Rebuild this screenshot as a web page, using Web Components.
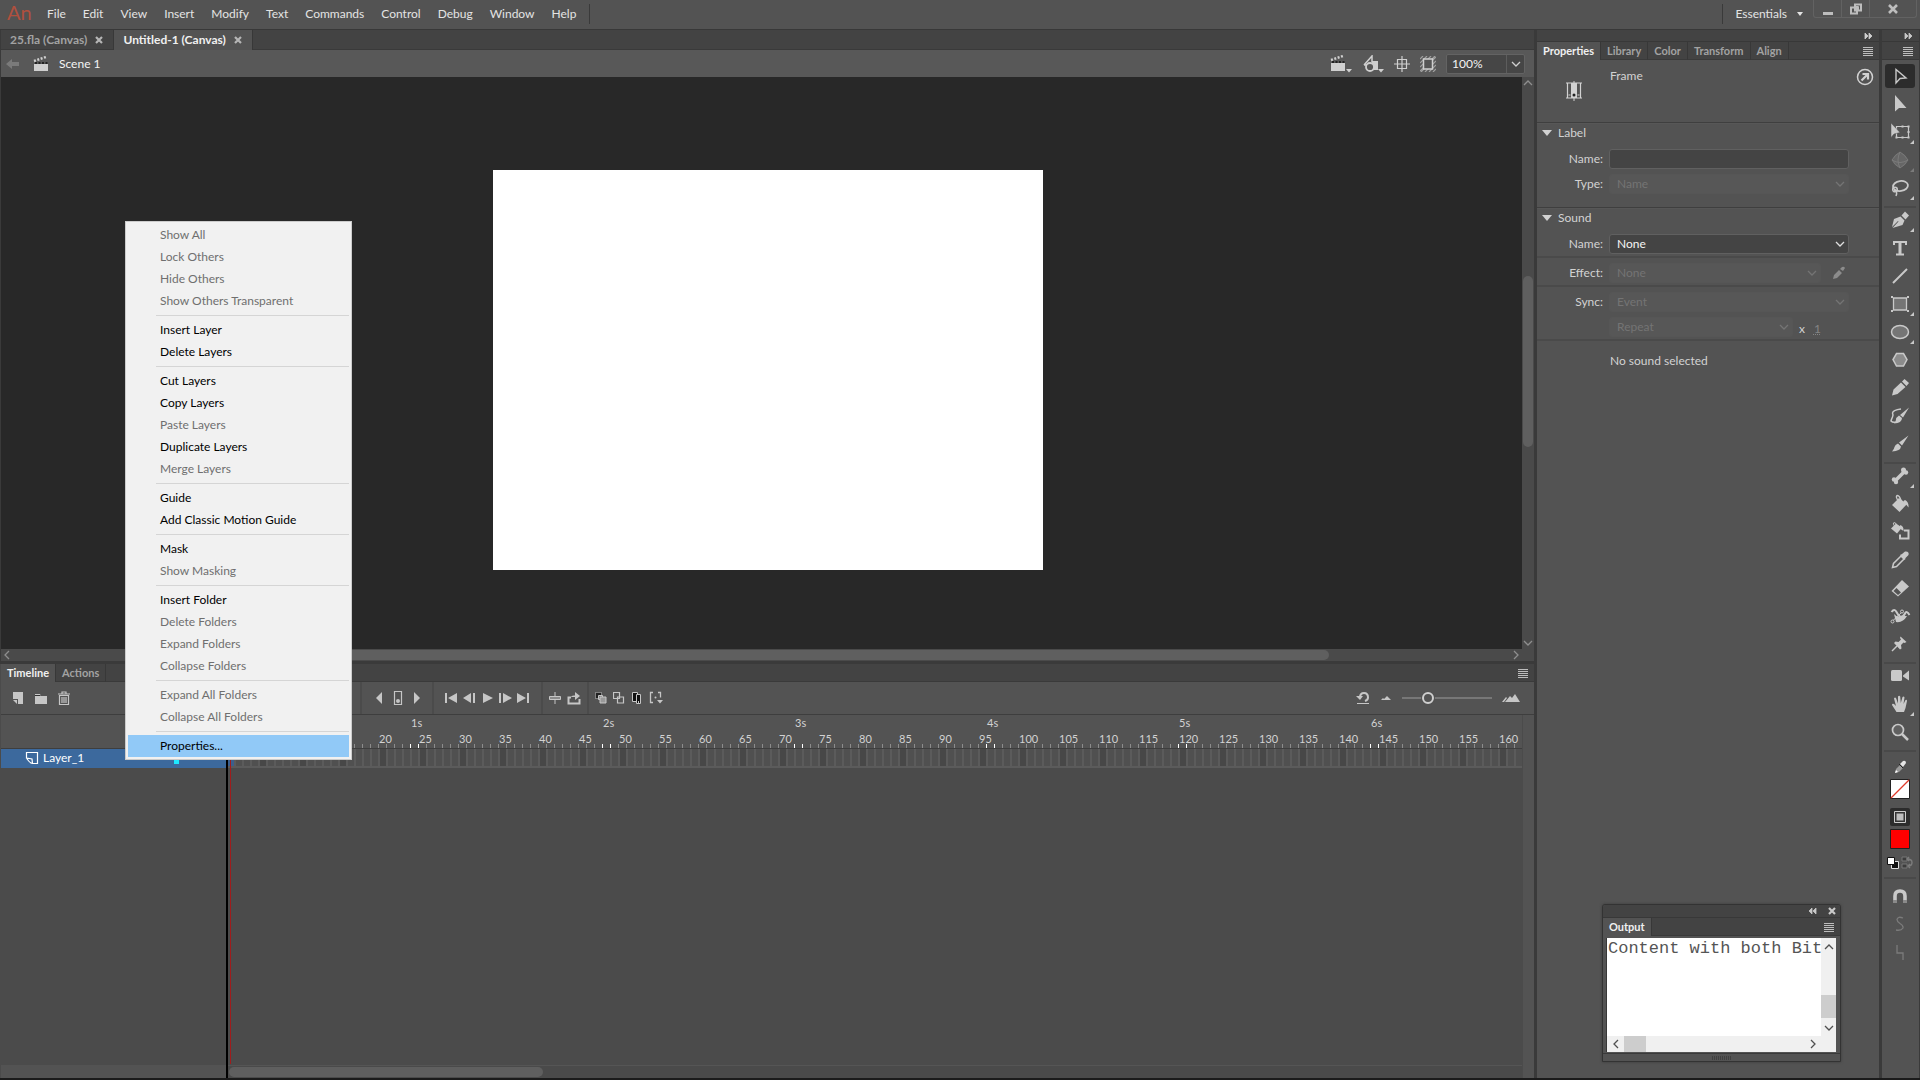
<!DOCTYPE html>
<html lang="en">
<head>
<meta charset="utf-8">
<title>Untitled-1 (Canvas)</title>
<style>
  html, body {
    height: 100%;
    margin: 0;
  }

  body {
    overflow: hidden;
    background: #1b1b1b;
    color: #d2d2d2;
    font: 12px/16px Lato, "Open Sans", sans-serif;
  }
</style>
</head>
<body>
<animate-app></animate-app>

<script>
// viewBox width, height and markup of every glyph; all drawn in currentColor
const ICONS = {
  back: [14, 12, '<path d="M0 6l6-5v3h7v4H6v3z" fill="currentColor"/>'],
  clapper: [16, 16, '<path d="M1 8h14v7H1z" fill="currentColor"/><path d="M1 5l12-4" stroke="currentColor" stroke-width="2.5" stroke-dasharray="2 1.5"/><path d="M2 7h13" stroke="#222" stroke-width="2" stroke-dasharray="2 1.5"/>'],
  clapperMenu: [22, 18, '<path d="M1 8h14v8H1z" fill="currentColor"/><path d="M1 5l12-4" stroke="currentColor" stroke-width="2.5" stroke-dasharray="2 1.5"/><path d="M2 7h13" stroke="#222" stroke-width="2" stroke-dasharray="2 1.5"/><path d="M16 14h6l-3 3.5z" fill="currentColor"/>'],
  symbolsMenu: [22, 18, '<path d="M2 10L10 1v6M2 10h5" fill="none" stroke="currentColor" stroke-width="1.5"/><path d="M10 6h6v9h-6z" fill="currentColor"/><circle cx="8" cy="12" r="4" fill="#575757" stroke="currentColor" stroke-width="1.8"/><path d="M16 14h6l-3 3.5z" fill="currentColor"/>'],
  center: [16, 16, '<path d="M8 0v16M0 8h16M3.5 3.5h9v9h-9z" fill="none" stroke="currentColor" stroke-width="1.2"/>'],
  clip: [16, 16, '<path d="M0 3l3-3M0 7l7-7M0 11L11 0M0 15L15 0M1 16L16 1M5 16L16 5M9 16l7-7M13 16l3-3" stroke="#a0a0a0" stroke-width="1.2"/><path d="M3.5 3h9v10h-9z" fill="#555" stroke="currentColor" stroke-width="1.5"/>'],
  chevronDown: [10, 6, '<path d="M1 1l4 4 4-4" fill="none" stroke="currentColor" stroke-width="1.3"/>'],
  chevronUp: [10, 6, '<path d="M1 5l4-4 4 4" fill="none" stroke="currentColor" stroke-width="1.3"/>'],
  chevronLeft: [6, 10, '<path d="M5 1L1 5l4 4" fill="none" stroke="currentColor" stroke-width="1.3"/>'],
  chevronRight: [6, 10, '<path d="M1 1l4 4-4 4" fill="none" stroke="currentColor" stroke-width="1.3"/>'],
  caret: [6, 4, '<path d="M0 0h6L3 4z" fill="currentColor"/>'],
  close: [8, 8, '<path d="M1 1l6 6M7 1L1 7" stroke="currentColor" stroke-width="2.2"/>'],
  minimize: [12, 12, '<path d="M1 9h10v3H1z" fill="currentColor"/>'],
  restore: [14, 12, '<path d="M6 1.5h6v6H6zM2 4.500h6v6H2z" fill="#535353" stroke="currentColor" stroke-width="2"/><path d="M6.5 3.5h3v4" fill="none" stroke="currentColor"/>'],
  closeWindow: [12, 12, '<path d="M2 2l8 8M10 2l-8 8" stroke="currentColor" stroke-width="2.6"/>'],
  collapse: [10, 8, '<path d="M1 1l3 3-3 3zM5 1l3 3-3 3z" fill="currentColor" stroke="currentColor" stroke-width=".8"/>'],
  expand: [10, 8, '<path d="M4 1L1 4l3 3zM8 1L5 4l3 3z" fill="currentColor" stroke="currentColor" stroke-width=".8"/>'],
  lines: [12, 10, '<path d="M1 1.5h10M1 3.5h10M1 5.5h10M1 7.5h10M1 9.500h10" stroke="currentColor"/>'],
  triangle: [10, 6, '<path d="M0 0h10L5 6z" fill="currentColor"/>'],
  frame: [18, 20, '<path d="M1 2h16M1 17h16M2.5 2v15M15.5 2v15" stroke="currentColor" stroke-width="1.2"/><path d="M6 2h6v15H6zM8.5 0h1v20h-1z" fill="currentColor"/><circle cx="9" cy="14" r="1.5" fill="#222"/><path d="M3.5 14h2M12.5 14h2" stroke="currentColor"/>'],
  help: [18, 18, '<circle cx="9" cy="9" r="7.5" fill="none" stroke="currentColor" stroke-width="1.5"/><path d="M5.5 12.500L11 7M6.500 6H12v5.5" fill="none" stroke="currentColor" stroke-width="2.2"/>'],
  pencilSmall: [14, 14, '<path d="M1 13l1-4 5-5 3 3-5 5zM8 3l2-2q2-1 3 1l-2 3z" fill="currentColor"/>'],

  newLayer: [14, 14, '<path d="M2 1h10v12H7V8H2z" fill="currentColor"/><path d="M2 9h4v4z" fill="currentColor"/>'],
  folder: [14, 14, '<path d="M1 3h5l1 2h6v8H1z" fill="currentColor"/><path d="M1 4.500h5.5" stroke="#333"/>'],
  trash: [14, 14, '<path d="M2.5 4.500h9v9h-9zM1 3h12M5 3V1h4v2M5 6v6M7 6v6M9 6v6" fill="none" stroke="currentColor" stroke-width="1.2"/>'],
  prevKey: [8, 14, '<path d="M7 1v12L1 7z" fill="currentColor"/>'],
  nextKey: [8, 14, '<path d="M1 1v12l6-6z" fill="currentColor"/>'],
  keyFrame: [10, 14, '<path d="M1.5.5h7v13h-7z" fill="none" stroke="currentColor" stroke-width="1.2"/><circle cx="5" cy="10" r="2" fill="currentColor"/>'],
  first: [14, 12, '<path d="M1 1h2v10H1zM13 1v10L4 6z" fill="currentColor"/>'],
  stepBack: [14, 12, '<path d="M9 1v10L1 6zM11 1h2v10h-2z" fill="currentColor"/>'],
  play: [14, 12, '<path d="M3 1v10l10-5z" fill="currentColor"/>'],
  stepForward: [14, 12, '<path d="M1 1h2v10H1zM5 1v10l9-5z" fill="currentColor"/>'],
  last: [14, 12, '<path d="M1 1v10l9-5zM11 1h2v10h-2z" fill="currentColor"/>'],
  centerFrame: [12, 14, '<path d="M5.5 1h1v12h-1z" fill="currentColor"/><path d="M.5 5.5h11v3H.5z" fill="#8a8a8a" stroke="currentColor"/>'],
  loop: [14, 14, '<path d="M4 6.5H1.5v6h11V8" fill="none" stroke="currentColor" stroke-width="2"/><path d="M4 6.500q0-2 3-2h1V1l5 4-5 4V6H4z" fill="currentColor"/>'],
  onion: [12, 12, '<path d="M.5.5h6v6h-6z" fill="#222" stroke="currentColor" stroke-dasharray="1 1"/><path d="M3.5 3.5h4v4h-4z" fill="#777" stroke="currentColor"/><path d="M5 5h6v6H5z" fill="#999" stroke="currentColor"/>'],
  onionOutline: [12, 12, '<path d="M.5.5h6v6h-6zM4.500 5h6v6h-6z" fill="#535353" stroke="currentColor" stroke-width="1.2"/>'],
  editFrames: [12, 14, '<path d="M1.5 1.5h5v9h-5z" fill="#111" stroke="currentColor"/><path d="M5.5 3.500h4v9h-4z" fill="#111" stroke="currentColor"/><path d="M7 10h1v2H7z" fill="currentColor"/>'],
  onionMarkers: [14, 14, '<path d="M4 1.500H1.500v10H4M9 1.500h2.500v5" fill="none" stroke="currentColor" stroke-width="1.3"/><circle cx="6.500" cy="6.500" r="1" fill="currentColor"/><path d="M8 9h6l-3 3.500z" fill="currentColor"/>'],
  resetZoom: [14, 14, '<path d="M4 6.500Q4 2 8 2t4 4.500Q12 9 9 10" fill="none" stroke="currentColor" stroke-width="2"/><path d="M0 5h7L4 9zM1 12h12v1H1z" fill="currentColor"/>'],
  hillSmall: [12, 6, '<path d="M1 5l2-2 1 1 3-3 4 4z" fill="currentColor"/>'],
  hillBig: [18, 10, '<path d="M0 9l4-5 1 1-3 4zM3 9l5-6 2 2 3-4 5 8z" fill="currentColor"/>'],
  layer: [14, 14, '<path d="M1.5 1.500h11v11H7.500L7 8 1.500 7zM1.500 7q3 5 6 5.500" fill="none" stroke="currentColor" stroke-width="1.2"/>'],

  select: [24, 24, '<path d="M8 5.500V19l4-4.500 6-.5z" fill="none" stroke="currentColor" stroke-width="1.4"/>'],
  subselect: [24, 24, '<path d="M7 3v16.500l4-3.500h7.500z" fill="currentColor"/>'],
  transform: [24, 24, '<path d="M8.500 6.500h12v11h-12z" fill="none" stroke="currentColor" stroke-width="1.2"/><path d="M7.500 16.500h2v2h-2zM19.500 16.500h2v2h-2zM19.500 5.500h2v2h-2zM13.500 5.500h2v2h-2zM13.500 16.500h2v2h-2zM19.500 11h2v2h-2z" fill="currentColor"/><path d="M3 3v14.500l3-3.500 6-1.500z" fill="currentColor" stroke="#535353" stroke-width=".5"/>'],
  rotate3d: [24, 24, '<circle cx="12" cy="12" r="7" fill="#666"/><path d="M12 4q5 3 8 8-3 5-8 8-5-3-8-8 3-5 8-8zM4 12q8 5 16 0M12 4q-4 8 0 16" fill="none" stroke="currentColor"/>'],
  lasso: [24, 24, '<ellipse cx="12.500" cy="10" rx="7.500" ry="5" fill="none" stroke="currentColor" stroke-width="1.8" transform="rotate(-8 12.500 10)"/><circle cx="7" cy="13.500" r="2.300" fill="none" stroke="currentColor" stroke-width="1.500"/><path d="M6 14q4 1 2 6" fill="none" stroke="currentColor" stroke-width="1.500"/>'],
  pen: [24, 24, '<path d="M13.500 7.500l3.500-4 4 4-3.500 4zM12.500 8.500l4 4-2 4.500-10 3 6-6.500-.5-.5-6 6 2-8z" fill="currentColor"/>'],
  text: [24, 24, '<path d="M5 5h14v4h-2V7h-3.500v10.500H16V19.500H8V17.500h2.500V7H7v2H5z" fill="currentColor"/>'],
  line: [24, 24, '<path d="M5 19L19 5" stroke="currentColor" stroke-width="2"/>'],
  rect: [24, 24, '<path d="M5.500 6h13v12h-13z" fill="#757575" stroke="currentColor" stroke-width="1.3"/><path d="M3 4h2v2H3zM19 4h2v2h-2zM3 18h2v2H3zM19 18h2v2h-2z" fill="currentColor"/>'],
  oval: [24, 24, '<ellipse cx="12" cy="12" rx="8.500" ry="6.500" fill="#757575" stroke="currentColor" stroke-width="1.500"/>'],
  poly: [24, 24, '<path d="M8.500 5.500h7l3.500 6-3.500 6.500h-7L5 11.500z" fill="#8c8c8c" stroke="currentColor" stroke-width="1.500"/>'],
  pencil: [24, 24, '<path d="M4 19.500l1.500-6 7.500-7 4.500 4.500-8 7zM14 5.500l2.500-2.500 4.500 4-2.500 3z" fill="currentColor"/>'],
  artBrush: [24, 24, '<path d="M21 3.500l-6 10-3-2.500zM11 11.500l3 2.500q0 5-8 5.500 2-2 2-4t3-4z" fill="currentColor"/><path d="M13 5Q5 6 4.500 9q1 2 0 4t-1.500 4q2 2 5 1" fill="none" stroke="currentColor" stroke-width="1.500"/>'],
  brush: [24, 24, '<path d="M20.500 3.500L14 13.500l-3-3zM10 11.500l3 3q-.5 4.500-9 5 2-2 2.500-4.500t3.500-3.500z" fill="currentColor"/>'],
  bone: [24, 24, '<path d="M7.500 16.500l9-9" stroke="currentColor" stroke-width="3.500"/><circle cx="15.500" cy="6" r="2.500" fill="currentColor"/><circle cx="18" cy="8.500" r="2.200" fill="currentColor"/><circle cx="6" cy="15.500" r="2.200" fill="currentColor"/><circle cx="8" cy="18" r="2.200" fill="currentColor"/>'],
  bucket: [24, 24, '<path d="M4 13l7-7 8 6-7.500 8zM17 8q4 2 3.500 7.500l-2-2.500-3-4z" fill="currentColor"/><path d="M11.500 11q-5-7-2-7.500 2 0 4 6" fill="none" stroke="currentColor" stroke-width="1.300"/>'],
  ink: [24, 24, '<path d="M3 8.500l5-5 6 4-5 6zM12 5q4 1 3.500 6l-3-2z" fill="currentColor"/><path d="M8 8Q4 3 6 2.500t4 5" fill="none" stroke="currentColor"/><path d="M16 10.500h4.500v8H12v-4" fill="none" stroke="currentColor" stroke-width="2"/>'],
  dropper: [24, 24, '<path d="M4.500 19.500l1-4L13 8l3 3-7.500 7.500z" fill="none" stroke="currentColor" stroke-width="1.500"/><path d="M12 7l2-1 3-2.500q4.500-.5 3.500 3.500L17.500 10l-.5 2z" fill="currentColor"/>'],
  eraser: [24, 24, '<path d="M3.500 15L14 4l7 6.500L10 20.500z" fill="currentColor"/><path d="M5.500 15l3-3 4.500 4.500-3 2.500z" fill="#535353"/>'],
  warp: [24, 24, '<path d="M4 17.500L14 8" stroke="currentColor"/><path d="M3.500 8q3-4 5 0t4 5q3 0 4.500-3.500t4.500 1.500" fill="none" stroke="currentColor" stroke-width="2"/><path d="M6 10q3 4 9 2l4 0q-4 7-11 6z" fill="currentColor"/><circle cx="4.500" cy="17.500" r="1.500" fill="#535353" stroke="currentColor"/><circle cx="14" cy="7.500" r="1.500" fill="#535353" stroke="currentColor"/>'],
  pin: [24, 24, '<path d="M12.500 4.500l6 5.500-2 1-1-.5-2.500 2.500.5 3.500-1.500 1-6-6.500 1.500-1.500 3 .5L13 7.500l-1-1.500z" fill="currentColor"/><path d="M9 14l-5 5" stroke="currentColor" stroke-width="1.500"/>'],
  camera: [24, 24, '<rect x="3" y="6" width="11" height="11" rx="1.500" fill="currentColor"/><path d="M15 11.500l6-5v10l-6-4z" fill="currentColor"/>'],
  hand: [24, 24, '<path d="M8.500 20L4 13q0-2 2-1l2 2-2-7.500q1-2 2.200 0l1.800 5V4.500q1.300-1.500 2.200 0l.6 6.500 1.700-6q1.500-1 2 .5l-1 6.500 2-4q1.500-.7 1.500 1L17.500 16l-1.500 4z" fill="currentColor"/>'],
  zoom: [24, 24, '<circle cx="10" cy="10" r="5.500" fill="#606060" stroke="currentColor" stroke-width="1.700"/><path d="M14 14l6 6" stroke="currentColor" stroke-width="2.500"/>'],
  strokeColor: [24, 24, '<path d="M7 18l1-4 4-4 3 3-4 4z" fill="#999"/><path d="M7 18l1-3 2 2z" fill="#fff"/><path d="M12 9l3-3q3-1 3 2l-3 4z" fill="#e6e6e6"/><path d="M11 9l4 4" stroke="#222"/>'],
  noStroke: [20, 20, '<path d="M.5.500h19v19H.5z" fill="#fff" stroke="#222"/><path d="M1 19L19 1" stroke="#e03a2a" stroke-width="1.200"/>'],
  fillKind: [20, 18, '<rect width="20" height="18" rx="2" fill="#2c2c2c"/><path d="M4.500 3.500h11v11h-11z" fill="#333" stroke="#ccc"/><path d="M6.500 5.500h7v7h-7z" fill="#bdbdbd"/>'],
  fillColor: [20, 20, '<path d="M.5.500h19v19H.5z" fill="red" stroke="#222"/>'],
  swapColors: [28, 14, '<path d="M5.500 5.500h7v7h-7z" fill="#111" stroke="#ddd"/><path d="M1.500 1.500h7v7h-7z" fill="#fff" stroke="#111"/><path d="M16 1h5v4h-5zM16 8h5v4h-5z" fill="#3c3c3c" stroke="#777"/><path d="M21 3q5 0 5 3.500T22 10M23 1l-2 2 2 2M24 8l-2 2 2 2" fill="none" stroke="#7c7c7c" stroke-width="1.400"/>'],
  magnet: [24, 24, '<path d="M7 16v-4q0-5 5-5t5 5v4" fill="none" stroke="currentColor" stroke-width="3.600"/><path d="M5 16h4v3H5zM15 16h4v3h-4z" fill="#8a8a8a"/>'],
  smooth: [24, 24, '<path d="M15 6q-5-2-6 1.500 0 2 3 4 3.500 2 3 4.500-2 3-7 2" fill="none" stroke="currentColor" stroke-width="1.300"/>'],
  straighten: [24, 24, '<path d="M9 5v8h6v7" fill="none" stroke="currentColor" stroke-width="1.300"/>'],
};

class UiElement extends HTMLElement {
  constructor() {
    super();
    this._shadowDOM = this.attachShadow({ mode: 'open' });
  }

  connectedCallback() {
    this.render();
  }
}

class UiIcon extends UiElement {
  render() {
    const [width, height, body] = ICONS[this.getAttribute('name')];
    this._shadowDOM.innerHTML = `
    <style>
      :host {
        display: inline-flex;
        flex: none;
      }

      svg {
        display: block;
      }
    </style>
    <svg width="${width}" height="${height}" viewBox="0 0 ${width} ${height}" aria-hidden="true">${body}</svg>`;
  }
}

class IconButton extends UiElement {
  render() {
    this._shadowDOM.innerHTML = `
    <style>
      :host {
        display: inline-flex;
        flex: none;
      }

      button {
        display: flex;
        align-items: center;
        justify-content: center;
        padding: 0;
        border: 0;
        background: none;
        color: inherit;
      }
    </style>
    <button type="button" aria-label="${this.getAttribute('label')}"><ui-icon name="${this.getAttribute('icon')}"></ui-icon></button>`;
  }
}

class MenuBar extends UiElement {
  render() {
    const menus = ['File', 'Edit', 'View', 'Insert', 'Modify', 'Text', 'Commands', 'Control', 'Debug', 'Window', 'Help'];
    this._shadowDOM.innerHTML = `
    <style>
      :host {
        display: flex;
        align-items: center;
        box-sizing: border-box;
        height: 30px;
        padding: 0 0 2px 7px;
        background: #535353;
        border-bottom: 1px solid #383838;
        color: #e4e4e4;
      }

      .logo {
        align-self: flex-start;
        width: 32px;
        color: #b0503e;
        font-size: 20px;
        line-height: 24px;
      }

      nav {
        display: flex;
        gap: 1px;
        height: 20px;
        padding-right: 5px;
        border-right: 1px solid #3a3a3a;
      }

      nav button, .space {
        padding: 0 8px;
        border: 0;
        background: none;
        color: inherit;
        font: inherit;
      }

      .space {
        display: flex;
        align-items: center;
        gap: 10px;
        height: 20px;
        margin-left: auto;
        padding: 0 10px 0 12px;
        border-left: 1px solid #3a3a3a;
      }

      .window {
        display: flex;
        align-self: flex-start;
        height: 17px;
        margin-right: 3px;
        border: 1px solid #626262;
        border-top: 0;
        border-radius: 0 0 3px 3px;
        color: #bdbdbd;
      }

      .window icon-button {
        justify-content: center;
        width: 27px;
      }

      .window icon-button + icon-button {
        border-left: 1px solid #626262;
      }

      .window icon-button:last-child {
        width: 46px;
      }
    </style>
    <span class="logo">An</span>
    <nav>${menus.map((name) => `<button type="button">${name}</button>`).join('')}</nav>
    <button type="button" class="space">Essentials <ui-icon name="caret"></ui-icon></button>
    <div class="window">
      <icon-button icon="minimize" label="Minimize"></icon-button>
      <icon-button icon="restore" label="Restore"></icon-button>
      <icon-button icon="closeWindow" label="Close"></icon-button>
    </div>`;
  }
}

// Row of tabs; tabs="A|B|C", the one numbered by active is raised
class TabStrip extends UiElement {
  render() {
    const active = Number(this.getAttribute('active') || 0);
    const closable = this.hasAttribute('closable');
    const tabs = this.getAttribute('tabs').split('|').map((name, i) => `
      <div class="tab${i === active ? ' active' : ''}">
        <button type="button">${name}</button>
        ${closable ? '<icon-button icon="close" label="Close tab"></icon-button>' : ''}
      </div>`).join('');
    this._shadowDOM.innerHTML = `
    <style>
      :host {
        display: flex;
        height: 18px;
        padding-right: 5px;
        background: #434343;
        box-shadow: inset 0 -1px #3a3a3a;
        color: #a2a2a2;
        font-size: 11px;
        font-weight: bold;
      }

      :host([closable]) {
        height: 20px;
        font-size: 12px;
      }

      .tab {
        display: flex;
        align-items: center;
        gap: 8px;
        padding: 0 6px;
        border-right: 1px solid #383838;
      }

      :host([closable]) .tab {
        padding: 0 10px 0 9px;
      }

      .active {
        background: #535353;
        color: #f0f0f0;
      }

      .tab button {
        padding: 0;
        border: 0;
        background: none;
        color: inherit;
        font: inherit;
      }

      .tab icon-button {
        color: #b5b5b5;
      }

      .more {
        align-self: center;
        margin-left: auto;
        color: #bdbdbd;
      }
    </style>
    ${tabs}
    ${closable ? '' : '<icon-button class="more" icon="lines" label="Panel menu"></icon-button>'}`;
  }
}

class EditBar extends UiElement {
  render() {
    this._shadowDOM.innerHTML = `
    <style>
      :host {
        display: flex;
        align-items: center;
        gap: 10px;
        height: 27px;
        padding: 0 9px 0 5px;
        background: #585858;
        color: #cfcfcf;
      }

      .back {
        margin-right: 3px;
        color: #7a7a7a;
      }

      .scene {
        flex: 1;
        color: #f4f4f4;
      }

      .zoom {
        display: grid;
        grid-template-columns: 60px 17px;
        align-items: center;
        height: 18px;
        border: 1px solid #636363;
        border-radius: 2px;
        background: #464646;
      }

      input {
        min-width: 0;
        height: 18px;
        padding: 0 5px;
        box-sizing: border-box;
        border: 0;
        border-right: 1px solid #5d5d5d;
        background: none;
        color: #f4f4f4;
        font: inherit;
      }

      .zoom icon-button {
        justify-content: center;
      }
    </style>
    <icon-button class="back" icon="back" label="Back"></icon-button>
    <ui-icon name="clapper"></ui-icon>
    <span class="scene">Scene 1</span>
    <icon-button icon="clapperMenu" label="Edit scene"></icon-button>
    <icon-button icon="symbolsMenu" label="Edit symbols"></icon-button>
    <icon-button icon="center" label="Center stage"></icon-button>
    <icon-button icon="clip" label="Clip content"></icon-button>
    <div class="zoom">
      <input type="text" value="100%" aria-label="Zoom">
      <icon-button icon="chevronDown" label="Zoom levels"></icon-button>
    </div>`;
  }
}

// parts="before thumb after" gives the shares of the track
class ScrollTrack extends UiElement {
  render() {
    const [before, thumb, after] = this.getAttribute('parts').split(' ');
    const vertical = this.hasAttribute('vertical');
    const bare = this.hasAttribute('bare');
    const arrow = (name) => (bare ? '' : `<span class="arrow"><ui-icon name="${name}"></ui-icon></span>`);
    this._shadowDOM.innerHTML = `
    <style>
      :host {
        display: flex;
        min-width: 0;
        min-height: 0;
        height: 12px;
        background: var(--track, #4a4a4a);
        color: var(--arrow, #8e8e8e);
      }

      :host([vertical]) {
        flex-direction: column;
        width: 12px;
        height: auto;
      }

      .arrow {
        display: flex;
        align-items: center;
        justify-content: center;
        flex: 0 0 var(--end, 12px);
      }

      .thumb {
        border-radius: var(--round, 6px);
        background: var(--thumb, #5f5f5f);
        margin: var(--inset, 1px);
      }
    </style>
    ${arrow(vertical ? 'chevronUp' : 'chevronLeft')}
    <span style="flex: ${before}"></span>
    <span class="thumb" style="flex: ${thumb}"></span>
    <span style="flex: ${after}"></span>
    ${arrow(vertical ? 'chevronDown' : 'chevronRight')}`;
  }
}

class StageView extends UiElement {
  render() {
    this._shadowDOM.innerHTML = `
    <style>
      :host {
        display: grid;
        grid-template-columns: 1fr 12px;
        grid-template-rows: 1fr 12px;
        min-height: 0;
        background: #4a4a4a;
      }

      .board {
        display: grid;
        place-items: center;
        padding: 14px 0 0 12px;
        min-height: 0;
        background: #282828;
      }

      .stage {
        width: 550px;
        height: 400px;
        background: #fff;
      }
    </style>
    <div class="board"><div class="stage"></div></div>
    <scroll-track vertical parts="187 171 190"></scroll-track>
    <scroll-track parts="180 1138 180"></scroll-track>`;
  }
}

class TimelineToolbar extends UiElement {
  render() {
    const group = (kind, items) => `<div class="group ${kind}">${items.map(([icon, label]) => `<icon-button icon="${icon}" label="${label}"></icon-button>`).join('')}</div>`;
    this._shadowDOM.innerHTML = `
    <style>
      :host {
        display: flex;
        align-items: center;
        height: 32px;
        background: #535353;
        border-bottom: 1px solid #3e3e3e;
        color: #c6c6c6;
      }

      .group {
        display: flex;
        align-items: center;
        gap: 6px;
        box-sizing: border-box;
        height: 32px;
        padding: 0 6px;
        border-right: 2px solid #4b4b4b;
      }

      .layers {
        gap: 9px;
        width: 361px;
        padding: 0 10px;
      }

      .keys {
        gap: 10px;
        padding: 0 11px 0 13px;
      }

      .playback {
        gap: 4px;
        padding: 0 11px 0 10px;
      }

      .onion {
        border: 0;
      }

      .scale {
        display: flex;
        align-items: center;
        gap: 10px;
        margin-left: auto;
        padding-right: 14px;
      }

      input {
        appearance: none;
        width: 90px;
        height: 12px;
        margin: 0;
        background: linear-gradient(#777, #777) center / 100% 2px no-repeat;
      }

      input::-webkit-slider-thumb {
        appearance: none;
        box-sizing: border-box;
        width: 12px;
        height: 12px;
        border: 2px solid #cfcfcf;
        border-radius: 50%;
        background: #535353;
        box-shadow: 0 0 0 1px #535353;
      }
    </style>
    ${group('layers', [['newLayer', 'New layer'], ['folder', 'New folder'], ['trash', 'Delete']])}
    ${group('keys', [['prevKey', 'Previous keyframe'], ['keyFrame', 'Insert keyframe'], ['nextKey', 'Next keyframe']])}
    ${group('playback', [['first', 'First frame'], ['stepBack', 'Step back'], ['play', 'Play'], ['stepForward', 'Step forward'], ['last', 'Last frame']])}
    ${group('', [['centerFrame', 'Center frame'], ['loop', 'Loop']])}
    ${group('onion', [['onion', 'Onion skin'], ['onionOutline', 'Onion skin outlines'], ['editFrames', 'Edit multiple frames'], ['onionMarkers', 'Modify markers']])}
    <div class="scale">
      <icon-button icon="resetZoom" label="Reset timeline zoom"></icon-button>
      <icon-button icon="hillSmall" label="Smaller frames"></icon-button>
      <input type="range" min="0" max="100" value="26" aria-label="Frame size">
      <icon-button icon="hillBig" label="Larger frames"></icon-button>
    </div>`;
  }
}

class TimelinePanel extends UiElement {
  render() {
    const frames = Array.from({ length: 32 }, (_, i) => `<span>${(i + 1) * 5}</span>`).join('');
    const seconds = [1, 2, 3, 4, 5, 6].map((n) => `<span>${n}s</span>`).join('');
    this._shadowDOM.innerHTML = `
    <style>
      :host {
        display: flex;
        flex-direction: column;
        min-height: 0;
        border-top: 3px solid #3a3a3a;
        background: #4b4b4b;
      }

      .body {
        display: grid;
        grid-template-columns: 225px minmax(0, 1fr) 12px;
        grid-template-rows: 34px 20px minmax(0, 1fr) 13px;
        flex: 1;
        min-height: 0;
      }

      .head {
        background: #535353;
        border-bottom: 1px solid #3e3e3e;
      }

      .layer {
        display: flex;
        align-items: center;
        gap: 4px;
        padding-left: 24px;
        background: #3c699d;
        color: #fff;
        margin-bottom: 1px;
      }

      .layer i {
        width: 5px;
        height: 5px;
        margin: 6px 47px 0 auto;
        background: #1ee8ff;
      }

      .frames {
        grid-area: 1 / 2 / 5 / 3;
        position: relative;
        display: grid;
        grid-template-rows: 34px 20px minmax(0, 1fr) 13px;
        border-left: 2px solid #000;
        overflow: hidden;
      }

      /* one tick closes each 8px frame, a bright pair stands at every second */
      .ruler {
        background:
          linear-gradient(90deg, transparent 182px, #fff 182px 183px, transparent 183px 190px, #fff 190px 191px, transparent 191px) 0 100% / 192px 4px repeat-x,
          linear-gradient(90deg, transparent 6px, #8c8c8c 6px 7px, transparent 7px) 0 100% / 8px 4px repeat-x,
          #535353;
        border-bottom: 1px solid #3e3e3e;
        overflow: hidden;
        font-size: 11px;
      }

      .row {
        display: flex;
      }

      .row span {
        flex: 0 0 40px;
      }

      .numbers {
        padding-left: 31px;
      }

      .seconds {
        padding-left: 183px;
      }

      .seconds span {
        flex-basis: 192px;
      }

      .cells {
        margin-bottom: 1px;
        border-bottom: 2px solid #5b5b5b;
        background:
          linear-gradient(90deg, transparent 32px, #474747 32px 38px, transparent 38px) 0 0 / 40px 100%,
          linear-gradient(90deg, #505050 6px, #5b5b5b 6px) 0 0 / 8px 100%;
      }

      .cells i {
        display: block;
        width: 6px;
        height: 100%;
        background: #3a5f8d;
      }

      .playhead {
        position: absolute;
        top: 35px;
        bottom: 14px;
        left: 2px;
        width: 1px;
        background: #a01c1c;
      }

      .foot {
        grid-area: 4 / 1;
        background: #535353;
      }

      .edge {
        grid-area: 1 / 3 / 5 / 4;
        background: #535353;
        border-left: 1px solid #4b4b4b;
      }

      .frames scroll-track {
        grid-row: 4;
        border-top: 1px solid #555;
      }
    </style>
    <tab-strip tabs="Timeline|Actions"></tab-strip>
    <timeline-toolbar></timeline-toolbar>
    <div class="body">
      <div class="head"></div>
      <div class="layer"><ui-icon name="layer"></ui-icon>Layer_1<i></i></div>
      <div class="foot"></div>
      <div class="frames">
        <div class="ruler">
          <div class="row seconds">${seconds}</div>
          <div class="row numbers">${frames}</div>
        </div>
        <div class="cells"><i></i></div>
        <scroll-track bare parts="0 314 980"></scroll-track>
        <div class="playhead"></div>
      </div>
      <div class="edge"></div>
    </div>`;
  }
}

// Labelled input or drop-down; the slot takes what follows the control
class FieldRow extends UiElement {
  render() {
    const label = this.getAttribute('label');
    const value = this.getAttribute('value') || '';
    const disabled = this.hasAttribute('disabled') ? 'disabled' : '';
    const named = label ? `<label for="control">${label}</label>` : '<span></span>';
    const aria = label ? '' : `aria-label="${this.getAttribute('hint')}"`;
    const control = this.hasAttribute('text')
      ? '<input id="control" type="text">'
      : `<select id="control" ${aria} ${disabled}><option>${value}</option></select><ui-icon name="chevronDown"></ui-icon>`;
    this._shadowDOM.innerHTML = `
    <style>
      :host {
        display: grid;
        grid-template-columns: 66px minmax(0, 1fr) auto;
        align-items: center;
        gap: 6px;
        height: 20px;
        padding-right: 24px;
      }

      label {
        text-align: right;
      }

      .control {
        display: grid;
        align-items: center;
      }

      input, select {
        grid-area: 1 / 1;
        box-sizing: border-box;
        width: 100%;
        height: 20px;
        margin: 0;
        padding: 0 7px;
        border: 1px solid #606060;
        border-radius: 3px;
        background: #444;
        color: #f4f4f4;
        font: inherit;
        appearance: none;
      }

      select:disabled {
        border-color: #565656;
        background: #575757;
        color: #747474;
        opacity: 1;
      }

      .control ui-icon {
        grid-area: 1 / 1;
        justify-self: end;
        margin-right: 4px;
        color: #e0e0e0;
        pointer-events: none;
      }

      :host([disabled]) .control ui-icon {
        color: #747474;
      }
    </style>
    ${named}<div class="control">${control}</div><slot></slot>`;
  }
}

class PropertiesPanel extends UiElement {
  render() {
    this._shadowDOM.innerHTML = `
    <style>
      :host {
        display: block;
        background: #535353;
      }

      .strip {
        display: flex;
        align-items: center;
        justify-content: flex-end;
        height: 11px;
        padding-right: 5px;
        background: #434343;
        border-bottom: 1px solid #383838;
        color: #d0d0d0;
      }

      section {
        border-top: 1px solid #3f3f3f;
        box-shadow: inset 0 1px #575757;
      }

      .kind {
        display: grid;
        grid-template-columns: 73px 1fr auto;
        height: 62px;
        box-sizing: border-box;
        padding: 8px 5px 0 0;
      }

      .kind ui-icon {
        justify-self: center;
        align-self: start;
      }

      .kind ui-icon:first-child {
        margin-top: 13px;
      }

      h2 {
        display: flex;
        align-items: center;
        gap: 6px;
        height: 19px;
        margin: 0 0 7px;
        padding-left: 5px;
        font-size: 12px;
        font-weight: normal;
      }

      .label field-row {
        margin-bottom: 5px;
      }

      .label {
        padding-bottom: 8px;
      }

      .line {
        padding: 5px 0 2px;
        border-top: 2px solid #4a4a4a;
      }

      .sound > field-row {
        margin-bottom: 2px;
      }

      .line field-row + field-row {
        margin-top: 5px;
      }

      .times {
        display: flex;
        gap: 9px;
        width: 56px;
        padding-top: 4px;
      }

      .times u {
        color: #858585;
        text-decoration: underline dotted;
      }

      p {
        margin: 0;
        padding: 12px 0 0 73px;
        border-top: 2px solid #4a4a4a;
      }

      field-row > ui-icon {
        margin: 0 9px 0 5px;
        color: #8c8c8c;
      }
    </style>
    <div class="strip"><ui-icon name="collapse"></ui-icon></div>
    <tab-strip tabs="Properties|Library|Color|Transform|Align"></tab-strip>
    <div class="kind"><ui-icon name="frame"></ui-icon><span>Frame</span><ui-icon name="help"></ui-icon></div>
    <section class="label">
      <h2><ui-icon name="triangle"></ui-icon>Label</h2>
      <field-row text label="Name:"></field-row>
      <field-row disabled label="Type:" value="Name"></field-row>
    </section>
    <section class="sound">
      <h2><ui-icon name="triangle"></ui-icon>Sound</h2>
      <field-row label="Name:" value="None"></field-row>
      <div class="line"><field-row disabled label="Effect:" value="None"><ui-icon name="pencilSmall"></ui-icon></field-row></div>
      <div class="line">
        <field-row disabled label="Sync:" value="Event"></field-row>
        <field-row disabled hint="Repeat mode" value="Repeat"><span class="times">x <u>1</u></span></field-row>
      </div>
      <p>No sound selected</p>
    </section>`;
  }
}

class ToolBox extends UiElement {
  render() {
    // a trailing + marks a tool with a fly-out, - a tool that is unavailable
    const groups = [
      'select subselect transform+ rotate3d+- lasso+',
      'pen+ text line rect+ oval+ poly pencil artBrush brush',
      'bone+ bucket ink dropper eraser warp pin',
      'camera hand+ zoom',
    ];
    const tool = (item) => {
      const name = item.replace(/[+-]/g, '');
      const classes = `${name === 'select' ? 'on ' : ''}${item.includes('+') ? 'more' : ''}`;
      return `<button type="button" class="${classes}" aria-label="${name}" ${item.includes('-') ? 'disabled' : ''}><ui-icon name="${name}"></ui-icon></button>`;
    };
    this._shadowDOM.innerHTML = `
    <style>
      :host {
        display: block;
        background: #535353;
        color: #c9c9c9;
      }

      .strip, .head {
        display: flex;
        align-items: center;
        justify-content: flex-end;
        height: 11px;
        padding-right: 5px;
        background: #434343;
        border-bottom: 1px solid #383838;
      }

      .head {
        height: 17px;
        color: #bdbdbd;
      }

      .tools, .colors {
        display: flex;
        flex-direction: column;
        align-items: center;
        padding: 4px 1px 0 0;
      }

      hr {
        align-self: stretch;
        height: 2px;
        margin: 0 2px;
        border: 0;
        border-bottom: 2px solid #494949;
      }

      button {
        position: relative;
        display: flex;
        align-items: center;
        justify-content: center;
        width: 30px;
        height: 24px;
        margin: 0 0 4px;
        padding: 0;
        border: 0;
        border-radius: 3px;
        background: none;
        color: inherit;
      }

      button:disabled {
        color: #7b7b7b;
      }

      .on {
        background: #2c2c2c;
      }

      .more::after {
        content: "";
        position: absolute;
        right: 1px;
        bottom: 0;
        border: 2px solid transparent;
        border-right-color: currentColor;
        border-bottom-color: currentColor;
      }

      .colors {
        padding-top: 3px;
      }

      .colors button {
        height: auto;
        margin: 0;
      }

      .colors button:nth-child(3) {
        margin: 9px 0 3px;
      }

      .colors button:nth-child(5) {
        margin: 7px 0 5px;
      }

      .colors hr {
        margin-bottom: 5px;
      }

      .colors hr ~ button {
        margin-bottom: 4px;
      }
    </style>
    <div class="strip"><ui-icon name="collapse"></ui-icon></div>
    <div class="head"><ui-icon name="lines"></ui-icon></div>
    <div class="tools">${groups.map((g) => `${g.split(' ').map(tool).join('')}<hr>`).join('')}</div>
    <div class="colors">
      ${['strokeColor', 'noStroke', 'fillKind', 'fillColor', 'swapColors'].map(tool).join('')}
      <hr>
      ${['magnet', 'smooth-', 'straighten-'].map(tool).join('')}
    </div>`;
  }
}

class OutputWindow extends UiElement {
  render() {
    this._shadowDOM.innerHTML = `
    <style>
      :host {
        display: block;
        box-sizing: border-box;
        width: 239px;
        border: 1px solid #333;
        border-radius: 3px 3px 0 0;
        background: #535353;
        overflow: hidden;
        box-shadow: 0 0 3px #3c3c3c;
      }

      .bar {
        display: flex;
        align-items: center;
        justify-content: flex-end;
        gap: 10px;
        height: 12px;
        padding-right: 4px;
        background: #434343;
        border-bottom: 1px solid #383838;
        color: #c9c9c9;
      }

      .view {
        display: grid;
        grid-template-columns: 1fr 15px;
        grid-template-rows: 98px 16px;
        margin: 2px 4px 0 3px;
        border-left: 1px solid #383838;
        --track: #f0f0f0;
        --thumb: #cdcdcd;
        --arrow: #505050;
        --end: 17px;
        --round: 0;
        --inset: 0;
        background: #f0f0f0;
      }

      textarea {
        min-width: 0;
        padding: 1px;
        border: 0;
        background: #fff;
        color: #555;
        font: 17px/19px "Liberation Mono", monospace;
        white-space: pre;
        resize: none;
        overflow: hidden;
      }

      scroll-track {
        width: auto;
        height: auto;
      }

      .grip {
        height: 7px;
        margin-top: 1px;
        border-top: 1px solid #3a3a3a;
        background: repeating-linear-gradient(90deg, #404040 0 1px, transparent 1px 2px) center / 20px 4px no-repeat;
      }
    </style>
    <div class="bar"><ui-icon name="expand"></ui-icon><icon-button icon="close" label="Close"></icon-button></div>
    <tab-strip tabs="Output"></tab-strip>
    <div class="view">
      <textarea readonly aria-label="Output">Content with both Bitm</textarea>
      <scroll-track vertical parts="40 23 1"></scroll-track>
      <scroll-track parts="0 22 159"></scroll-track>
    </div>
    <div class="grip"></div>`;
  }
}

class ContextMenu extends UiElement {
  render() {
    // a leading ! greys the entry out
    const groups = [
      ['!Show All', '!Lock Others', '!Hide Others', '!Show Others Transparent'],
      ['Insert Layer', 'Delete Layers'],
      ['Cut Layers', 'Copy Layers', '!Paste Layers', 'Duplicate Layers', '!Merge Layers'],
      ['Guide', 'Add Classic Motion Guide'],
      ['Mask', '!Show Masking'],
      ['Insert Folder', '!Delete Folders', '!Expand Folders', '!Collapse Folders'],
      ['!Expand All Folders', '!Collapse All Folders'],
      ['Properties...'],
    ];
    const item = (text) => `<button type="button" role="menuitem" ${text[0] === '!' ? 'disabled' : ''} class="${text === 'Properties...' ? 'hot' : ''}">${text.replace('!', '')}</button>`;
    this._shadowDOM.innerHTML = `
    <style>
      :host {
        display: flex;
        flex-direction: column;
        box-sizing: border-box;
        width: 227px;
        padding: 2px;
        border: 1px solid #ccc;
        background: #f1f1f1;
        color: #000;
      }

      button {
        height: 22px;
        padding: 0 0 0 32px;
        border: 0;
        background: none;
        color: inherit;
        font: inherit;
        text-align: left;
      }

      button:disabled {
        color: #6f6f6f;
      }

      .hot {
        background: #91c9f7;
      }

      hr {
        height: 1px;
        margin: 3px 0 3px 28px;
        border: 0;
        background: #d5d5d5;
      }
    </style>
    ${groups.map((g) => g.map(item).join('')).join('<hr>')}`;
  }
}

class AnimateApp extends UiElement {
  render() {
    this._shadowDOM.innerHTML = `
    <style>
      :host {
        position: relative;
        display: grid;
        grid-template-columns: minmax(0, 1fr) 342px 37px;
        grid-template-rows: 30px minmax(0, 62fr) minmax(0, 41fr);
        column-gap: 3px;
        box-sizing: border-box;
        height: 100vh;
        padding: 0 1px 2px 0;
        background: #3a3a3a;
      }

      :host::after {
        content: "";
        position: absolute;
        right: 0;
        bottom: 0;
        left: 0;
        height: 2px;
        background: #1b1b1b;
      }

      menu-bar {
        grid-column: 1 / -1;
        margin-right: -1px;
      }

      .editor {
        display: grid;
        grid-template-rows: 20px 27px minmax(0, 1fr);
        padding-left: 1px;
      }

      timeline-panel {
        grid-area: 3 / 1;
        padding-left: 1px;
      }

      properties-panel {
        grid-area: 2 / 2 / 4 / 3;
      }

      tool-box {
        grid-area: 2 / 3 / 4 / 4;
      }

      output-window {
        position: absolute;
        right: 79px;
        bottom: 18px;
      }

      context-menu {
        position: absolute;
        top: 221px;
        left: 125px;
      }
    </style>
    <menu-bar></menu-bar>
    <div class="editor">
      <tab-strip closable active="1" tabs="25.fla (Canvas)|Untitled-1 (Canvas)"></tab-strip>
      <edit-bar></edit-bar>
      <stage-view></stage-view>
    </div>
    <timeline-panel></timeline-panel>
    <properties-panel></properties-panel>
    <tool-box></tool-box>
    <output-window></output-window>
    <context-menu></context-menu>`;
  }
}

customElements.define('ui-icon', UiIcon);
customElements.define('icon-button', IconButton);
customElements.define('menu-bar', MenuBar);
customElements.define('tab-strip', TabStrip);
customElements.define('edit-bar', EditBar);
customElements.define('scroll-track', ScrollTrack);
customElements.define('stage-view', StageView);
customElements.define('timeline-toolbar', TimelineToolbar);
customElements.define('timeline-panel', TimelinePanel);
customElements.define('field-row', FieldRow);
customElements.define('properties-panel', PropertiesPanel);
customElements.define('tool-box', ToolBox);
customElements.define('output-window', OutputWindow);
customElements.define('context-menu', ContextMenu);
customElements.define('animate-app', AnimateApp);
</script>
</body>
</html>
